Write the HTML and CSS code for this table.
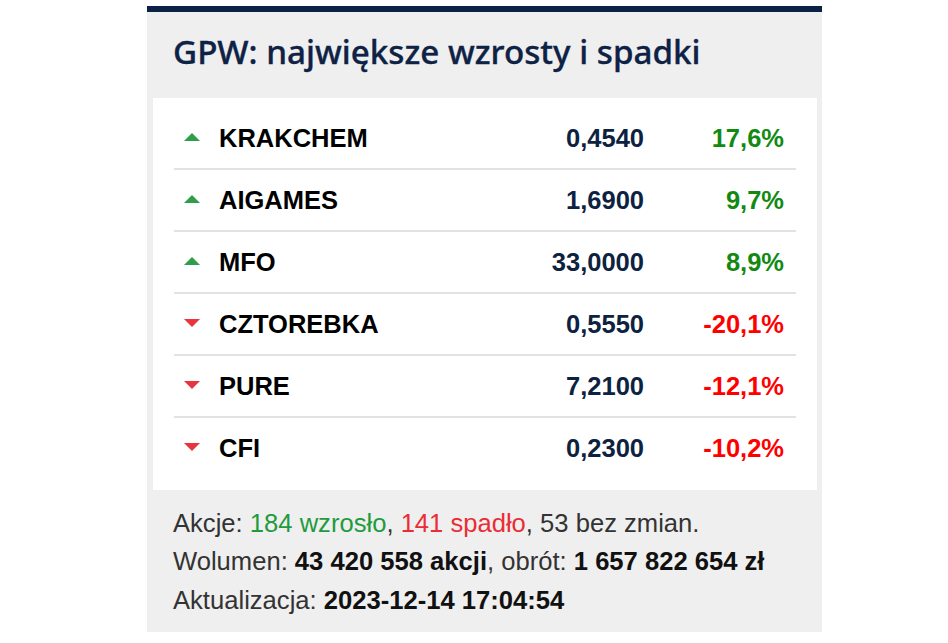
FILE: index.html
```html
<!DOCTYPE html>
<html lang="pl">
<head>
<meta charset="utf-8">
<title>GPW: największe wzrosty i spadki</title>
<link rel="stylesheet" href="styles.css">
</head>
<body>
<section class="widget">
  <h2 class="title">GPW: największe wzrosty i spadki</h2>
  <div class="panel">
    <div class="row up"><span class="arrow"></span><span class="ticker">KRAKCHEM</span><span class="price">0,4540</span><span class="chg">17,6%</span></div>
    <div class="row up"><span class="arrow"></span><span class="ticker">AIGAMES</span><span class="price">1,6900</span><span class="chg">9,7%</span></div>
    <div class="row up"><span class="arrow"></span><span class="ticker">MFO</span><span class="price">33,0000</span><span class="chg">8,9%</span></div>
    <div class="row down"><span class="arrow"></span><span class="ticker">CZTOREBKA</span><span class="price">0,5550</span><span class="chg">-20,1%</span></div>
    <div class="row down"><span class="arrow"></span><span class="ticker">PURE</span><span class="price">7,2100</span><span class="chg">-12,1%</span></div>
    <div class="row down"><span class="arrow"></span><span class="ticker">CFI</span><span class="price">0,2300</span><span class="chg">-10,2%</span></div>
  </div>
  <div class="summary">
    <p>Akcje: <span class="g">184 wzrosło</span>, <span class="r">141 spadło</span>, 53 bez zmian.</p>
    <p>Wolumen: <b>43 420 558 akcji</b>, obrót: <b>1 657 822 654 zł</b></p>
    <p>Aktualizacja: <b>2023-12-14 17:04:54</b></p>
  </div>
</section>
</body>
</html>
```

FILE: styles.css
```css
html, body {
  margin: 0;
  padding: 0;
  background: #ffffff;
}

body {
  padding: 6px 0 0 147px;
  font-family: "Liberation Sans", Arial, sans-serif;
}

.widget {
  width: 664px;
  background: #efefef;
  border-top: 6px solid #0b2244;
  padding: 0 5px 13px 6px;
}

.title {
  margin: 0;
  padding: 18px 0 24px 20px;
  font-family: "Noto Sans", "Open Sans", sans-serif;
  font-weight: 500;
  font-size: 33.2px;
  line-height: 44px;
  color: #0e2245;
  -webkit-text-stroke: 0.35px #0e2245;
}

.panel {
  background: #ffffff;
  padding: 10px 21px 10px 21px;
}

.row {
  display: flex;
  align-items: center;
  height: 60px;
  border-bottom: 2px solid #e2e2e2;
  font-size: 25.5px;
  font-weight: bold;
}

.row:last-child {
  border-bottom-color: transparent;
}

.arrow {
  width: 0;
  height: 0;
  margin: 0 19px 0 10px;
  border-left: 8.5px solid transparent;
  border-right: 8.5px solid transparent;
}

.up .arrow {
  border-bottom: 8px solid #2d9e4b;
  margin-top: -2px;
}

.down .arrow {
  border-top: 8px solid #e8343f;
  margin-top: -2px;
}

.ticker {
  flex: 1;
  color: #000000;
}

.price {
  color: #0d2240;
  text-align: right;
}

.chg {
  width: 140px;
  padding-right: 12px;
  text-align: right;
}

.up .chg { color: #128a12; }
.down .chg { color: #ff0000; }

.summary {
  padding: 14px 0 0 20px;
  font-size: 25.6px;
  line-height: 38.4px;
  color: #333333;
}

.summary p {
  margin: 0;
}

.summary b {
  color: #111111;
}

.summary .g { color: #1f9b3e; }
.summary .r { color: #ea2c35; }
```
